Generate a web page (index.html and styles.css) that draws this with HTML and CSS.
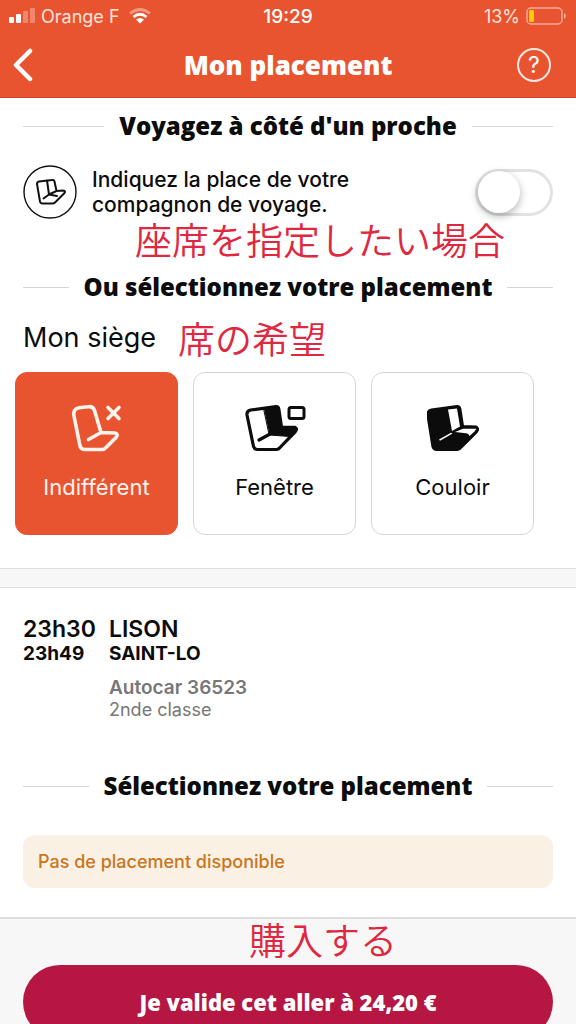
FILE: index.html
```html
<!DOCTYPE html>
<html lang="fr">
<head>
<meta charset="utf-8">
<meta name="viewport" content="width=device-width, initial-scale=1">
<title>Mon placement</title>
<link rel="stylesheet" href="styles.css">
</head>
<body>
<div class="app">
  <header class="header">
    <div class="status">
      <div class="status-side">
        <svg class="signal" viewBox="0 0 26 16" aria-hidden="true"><g fill="#fff"><rect y="9" width="5" height="6" rx="1"/><rect x="7" y="6" width="5" height="9" rx="1"/><rect x="14" y="3" width="5" height="12" rx="1" opacity=".3"/><rect x="21" y="0" width="5" height="15" rx="1" opacity=".3"/></g></svg>
        <span>Orange F</span>
        <svg class="wifi" viewBox="0 0 22 16" aria-hidden="true"><g fill="none" stroke="#fff" stroke-width="2.8"><path d="M1 5.500Q11-2.500 21 5.500" opacity=".4"/><path d="M4.500 9Q11 3.500 17.500 9"/></g><path d="M7 11.500Q11 8.500 15 11.500L11 15.500Z" fill="#fff"/></svg>
      </div>
      <span class="clock">19:29</span>
      <div class="status-side status-right">
        <span>13%</span>
        <svg class="battery" viewBox="0 0 41 18" aria-hidden="true"><rect x="1" y="1" width="35" height="16" rx="4" fill="none" stroke="#fff" stroke-opacity=".5" stroke-width="1.5"/><path d="M38 6Q42 9 38 12Z" fill="#fff" opacity=".5"/><rect x="3" y="3" width="5" height="12" rx="1.500" fill="#fc0"/></svg>
      </div>
    </div>
    <div class="nav">
      <button class="icon-button" aria-label="Retour"><svg class="back" viewBox="0 0 20 34" aria-hidden="true"><path d="M17 3 3 17 17 31" fill="none" stroke="#fff" stroke-width="4.500" stroke-linecap="round" stroke-linejoin="round"/></svg></button>
      <h1 class="title">Mon placement</h1>
      <button class="help" aria-label="Aide">?</button>
    </div>
  </header>

  <main>
    <section class="choice">
      <h2 class="heading">Voyagez à côté d'un proche</h2>
      <div class="companion">
        <svg class="companion-icon" viewBox="0 0 54 54" aria-hidden="true"><g fill="none" stroke="#111" stroke-linecap="round" stroke-linejoin="round"><circle cx="27" cy="27" r="26" stroke-width="1.400"/><path stroke-width="2" d="M16 16.500 29 15Q31 14.500 31.500 16.500L33.500 26 40 25.500Q43.500 26 41 28.500L32 37.500Q31 38.500 29.500 38.500H19.500Q17.500 38.500 17 36.500L14 19Q14 17 16 16.500ZM24 15.500 26 29.500 33.500 26M20.500 33.500 26 29.500 34 31"/></g></svg>
        <label class="companion-label" for="companion">Indiquez la place de votre compagnon de voyage.</label>
        <input class="switch" type="checkbox" role="switch" id="companion">
      </div>
      <p class="note note-seat" lang="ja">座席を指定したい場合</p>

      <h2 class="heading">Ou sélectionnez votre placement</h2>
      <fieldset class="seats">
        <legend class="seats-title"><span>Mon siège</span> <span class="note" lang="ja">席の希望</span></legend>
        <div class="cards">
          <label class="card"><input class="radio" type="radio" name="seat" checked>
            <svg class="seat" viewBox="0 0 52 52" aria-hidden="true"><g fill="none" stroke="currentColor" stroke-width="3.600" stroke-linecap="round" stroke-linejoin="round"><path d="M8 7.800 17 6.800Q22 6 23.500 10.500L30 32.500 44 33Q48 34 45 37.500L35 47.500Q33.500 49.500 31 49.500H14Q10 49.500 9 46L3 16Q1.500 9 8 7.800ZM30 32.500 17.500 39.500M37 7.500 48 18.500M48 7.500 37 18.500"/></g></svg>
            <span>Indifférent</span></label>
          <label class="card"><input class="radio" type="radio" name="seat">
            <svg class="seat seat-wide" viewBox="0 0 62 52" aria-hidden="true"><g stroke="currentColor" stroke-width="3.200" stroke-linecap="round" stroke-linejoin="round"><path fill="none" d="M6.500 10 32 6.700Q34.300 6.500 34.800 9L37.500 27 51 27.300Q54 29 51 32L36 47.500Q34.500 49.500 32.500 49.500H13.500Q10.500 49.500 9.500 46.500L3 15Q2.500 11 6.500 10ZM26 34 15 40"/><path fill="currentColor" stroke-width="1" d="M20 9 34 7 37.500 27 53 28 46 36.500 25.500 35Z"/><rect x="45" y="7.500" width="15" height="11" rx="2" fill="none" stroke-width="3"/></g></svg>
            <span>Fenêtre</span></label>
          <label class="card"><input class="radio" type="radio" name="seat">
            <svg class="seat" viewBox="2 0 52 52" aria-hidden="true"><g stroke="currentColor" stroke-width="3.200" stroke-linecap="round" stroke-linejoin="round"><path fill="currentColor" d="M6.500 10 32 6.700Q34.300 6.500 34.800 9L37.500 26.500 51 27Q54 29 51 32L36 47Q34.500 49.500 32.500 49.500H11.500Q9 49.500 8 46.500L3 15Q2.500 11 6.500 10Z"/></g><path fill="#fff" d="M23 9.500 32 8.500 35 26.500 27 31ZM30 32 38 28.800 51.500 28.800 49.500 31.500 44.500 36Q44 33.500 41 33.300ZM14 39.500 26 32.800 27.500 33.500 15 40.800Z"/></svg>
            <span>Couloir</span></label>
        </div>
      </fieldset>
    </section>

    <section class="trip">
      <dl class="journey">
        <dt class="time">23h30</dt><dd class="station">LISON</dd>
        <dt class="time arrival">23h49</dt><dd class="station arrival">SAINT-LO</dd>
        <dd class="service"><strong class="vehicle">Autocar 36523</strong><span>2nde classe</span></dd>
      </dl>
      <h2 class="heading">Sélectionnez votre placement</h2>
      <p class="alert">Pas de placement disponible</p>
    </section>
  </main>

  <footer class="footer">
    <p class="note note-buy" lang="ja">購入する</p>
    <button class="submit">Je valide cet aller à 24,20 €</button>
  </footer>
</div>
</body>
</html>
```
FILE: styles.css
```css
* { box-sizing: border-box; }

body, h1, h2, p, dl, dd, fieldset, legend { margin: 0; padding: 0; }

body {
  background: #f7f7f7;
  color: #0c0c0c;
  font-family: Inter, "Noto Sans CJK JP", sans-serif;
}

button {
  border: 0;
  padding: 0;
  background: none;
  color: inherit;
  font: inherit;
  cursor: pointer;
}

svg { display: block; }

.app {
  height: 100vh;
  overflow-y: auto;
  scrollbar-width: none;
}

.header {
  background: #e95430;
  color: #fff;
  border-bottom: 1px solid #cf4526;
}

.status {
  display: grid;
  grid-template-columns: 1fr auto 1fr;
  align-items: center;
  height: 32px;
  padding: 0 9px;
  font-size: 18px;
}

.status-side { display: flex; align-items: center; gap: 6px; color: #ffe3da; }
.status-right { justify-content: flex-end; }
.signal { width: 26px; height: 16px; }
.wifi { width: 22px; height: 16px; margin-left: 3px; }
.battery { width: 41px; height: 18px; }
.clock { font-size: 19px; font-weight: 500; }

.nav {
  display: grid;
  grid-template-columns: 1fr auto 1fr;
  align-items: center;
  height: 65px;
  padding: 0 25px 0 13px;
  column-gap: 12px;
}

.icon-button { width: 34px; }
.back { width: 20px; height: 34px; }

.title {
  padding-left: 12px;
  font-family: "Open Sans", sans-serif;
  font-size: 26px;
  font-weight: 800;
}

.help {
  justify-self: end;
  width: 34px;
  height: 34px;
  border: 2px solid #ffe9e2;
  border-radius: 50%;
  font-size: 23px;
  line-height: 28px;
}

.choice {
  padding-top: 10px;
  padding-bottom: 33px;
  background: #fff;
}

.heading {
  display: flex;
  align-items: center;
  gap: 15px;
  padding: 0 23px;
  font-family: "Open Sans", sans-serif;
  font-size: 24px;
  font-weight: 800;
  line-height: 36px;
  white-space: nowrap;
}

.heading::before, .heading::after {
  content: "";
  flex: 1;
  height: 1px;
  background: #d6d6d6;
}

.companion {
  display: flex;
  align-items: center;
  gap: 15px;
  padding: 21px 23px 0;
}

.companion-icon { width: 54px; height: 54px; }

.companion-label {
  width: 290px;
  font-size: 21px;
  font-weight: 500;
  line-height: 25px;
}

.switch {
  display: flex;
  align-items: center;
  appearance: none;
  width: 78px;
  height: 47px;
  margin: 0 0 0 auto;
  border: 3px solid #e2e2e2;
  border-radius: 24px;
  background: #fff;
}

.switch::before {
  content: "";
  width: 42px;
  height: 42px;
  border-radius: 50%;
  background: #fff;
  box-shadow: 0 3px 8px rgba(0, 0, 0, .3);
}

.note {
  color: #df2840;
  font-family: "Noto Sans CJK JP", sans-serif;
  font-size: 37px;
  font-weight: 350;
  line-height: 40px;
}

.note-seat { padding: 0 0 10px 135px; }

.seats { border: 0; min-width: 0; }

.seats-title {
  display: flex;
  align-items: center;
  gap: 22px;
  padding: 13px 23px 0;
  font-size: 27px;
  line-height: 40px;
}

.cards {
  display: grid;
  grid-template-columns: repeat(3, 1fr);
  gap: 15px;
  padding: 14px 42px 0 15px;
}

.card {
  display: flex;
  flex-direction: column;
  align-items: center;
  gap: 22px;
  aspect-ratio: 1;
  padding-top: 27px;
  border: 1px solid #d9d5d6;
  border-radius: 12px;
  font-size: 22px;
  line-height: 26px;
  cursor: pointer;
}

.card:has(:checked) { border-color: #e95430; background: #e95430; color: #fff3ee; }

.radio { position: absolute; opacity: 0; }

.seat { width: 52px; height: 52px; }
.seat-wide { width: 62px; }

.trip {
  padding-bottom: 29px;
  border-bottom: 2px solid #dedcdd;
  background: #fff;
}

.trip::before {
  content: "";
  display: block;
  height: 18px;
  border: solid #dedcdd;
  border-width: 1px 0;
  background: #f7f7f7;
}

.journey {
  display: grid;
  grid-template-columns: 74px 1fr;
  column-gap: 12px;
  padding: 28px 23px 47px;
  font-size: 23px;
  font-weight: 600;
  line-height: 26px;
}

.arrival { font-size: 19px; font-weight: 700; line-height: 23px; }

.service {
  display: grid;
  grid-column: 2;
  padding-top: 12px;
  color: #777;
  font-size: 18px;
  font-weight: 400;
  line-height: 22px;
}

.vehicle { font-size: 19px; font-weight: 600; }

.alert {
  margin: 31px 23px 0;
  padding: 13px 15px;
  border-radius: 12px;
  background: #fbf0e4;
  color: #c9761c;
  font-size: 18px;
  font-weight: 500;
  line-height: 27px;
}

.footer { padding: 0 23px 24px; }

.note-buy { padding: 0 0 6px 226px; }

.submit {
  width: 100%;
  height: 74px;
  border-radius: 37px;
  background: #b61642;
  color: #fff;
  font-family: "Open Sans", sans-serif;
  font-size: 22px;
  font-weight: 800;
}
```
